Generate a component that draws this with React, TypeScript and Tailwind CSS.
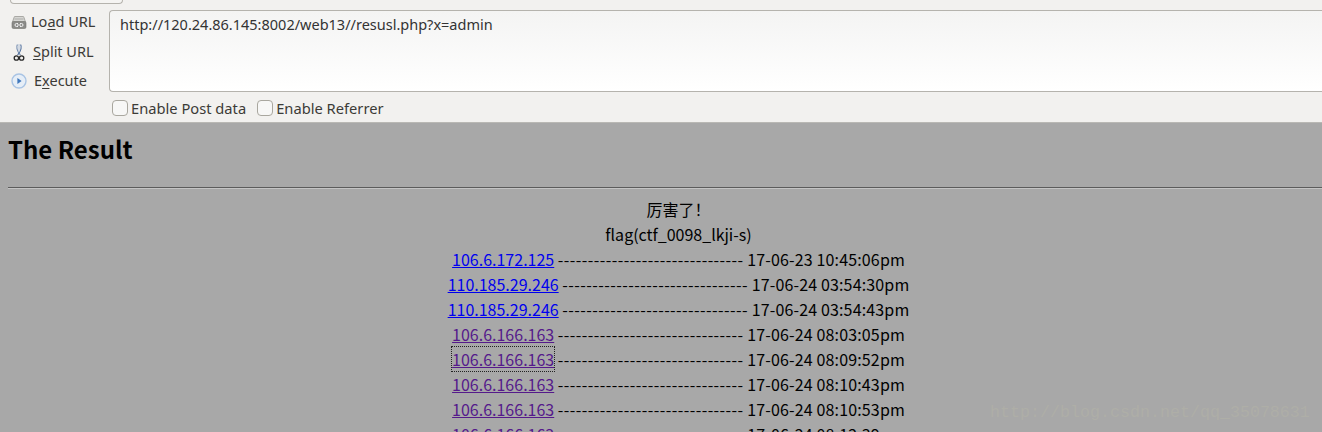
import React from 'react';

const dashes = '-'.repeat(31);

type Row = { ip: string; time: string; visited?: boolean; focused?: boolean };

const rows: Row[] = [
  { ip: '106.6.172.125', time: '17-06-23 10:45:06pm' },
  { ip: '110.185.29.246', time: '17-06-24 03:54:30pm' },
  { ip: '110.185.29.246', time: '17-06-24 03:54:43pm' },
  { ip: '106.6.166.163', time: '17-06-24 08:03:05pm', visited: true },
  { ip: '106.6.166.163', time: '17-06-24 08:09:52pm', visited: true, focused: true },
  { ip: '106.6.166.163', time: '17-06-24 08:10:43pm', visited: true },
  { ip: '106.6.166.163', time: '17-06-24 08:10:53pm', visited: true },
  { ip: '106.6.166.163', time: '17-06-24 08:12:39pm', visited: true },
];

function LoadIcon() {
  return (
    <svg width="16" height="16" viewBox="0 0 16 16">
      <path d="M3 3.5 Q3 2.5 4 2.5 H12 Q13 2.5 13 3.5 L14.5 8 H1.5 Z" fill="#d6d6d3" stroke="#9a9a96" strokeWidth="0.8" />
      <path d="M3.5 5 H12.5" stroke="#a5a5a2" strokeWidth="0.8" />
      <rect x="1" y="7.5" width="14" height="7" rx="1.5" fill="#8b8b88" stroke="#73736f" strokeWidth="0.6" />
      <path d="M7 9.5 H5.5 a1.5 1.5 0 0 0 0 3 H7 M9 9.5 H10.5 a1.5 1.5 0 0 1 0 3 H9 M6 11 H10" fill="none" stroke="#f2f2f2" strokeWidth="1" />
    </svg>
  );
}

function ScissorsIcon() {
  return (
    <svg width="12" height="19" viewBox="0 0 12 19">
      <path d="M4.4 1.5 C3.2 3.5 3.6 8 7.4 12" fill="none" stroke="#6f88ad" strokeWidth="1.1" />
      <path d="M7.6 1.5 C8.8 3.5 8.4 8 4.6 12" fill="none" stroke="#4f6f9e" strokeWidth="1.1" />
      <path d="M6 1 V8" stroke="#b4c2d6" strokeWidth="1" />
      <circle cx="3.4" cy="15" r="2.2" fill="none" stroke="#2a2a2a" strokeWidth="1.3" />
      <circle cx="8.6" cy="15" r="2.2" fill="none" stroke="#2a2a2a" strokeWidth="1.3" />
    </svg>
  );
}

function ExecuteIcon() {
  return (
    <svg width="16" height="16" viewBox="0 0 16 16">
      <circle cx="8" cy="8" r="7" fill="#e6eef7" stroke="#a9c4e4" strokeWidth="1.4" />
      <path d="M6.4 5 L10.6 8 L6.4 11 Z" fill="#3f78bd" />
    </svg>
  );
}

function Mnemonic({ before, letter, after }: { before: string; letter: string; after: string }) {
  return (
    <span>
      {before}
      <span className="underline underline-offset-2">{letter}</span>
      {after}
    </span>
  );
}

function Toolbar() {
  return (
    <div className="h-[123px] bg-[#f2f1ef] border-b border-[#b9b8b4] text-[#3c3b37] text-[14.5px] font-['Noto_Sans',sans-serif]">
      <div className="ml-[10px] w-[113px] h-[4px] border-x border-b border-[#b5b3ad] rounded-b-[4px] bg-[#f5f4f2]" />
      <div className="flex mt-[6px]">
        <div className="w-[109px] shrink-0 flex flex-col">
          <div className="h-[24px] flex items-center pl-[11px] gap-[4px]">
            <LoadIcon />
            <Mnemonic before="Lo" letter="a" after="d URL" />
          </div>
          <div className="h-[30px] mt-[3px] flex items-center pl-[13px] gap-[8px]">
            <ScissorsIcon />
            <Mnemonic before="" letter="S" after="plit URL" />
          </div>
          <div className="h-[28px] flex items-center pl-[11px] gap-[7px]">
            <ExecuteIcon />
            <Mnemonic before="E" letter="x" after="ecute" />
          </div>
        </div>
        <div className="flex-1 h-[82px] border border-r-0 border-[#b5b3ad] rounded-l-[4px] bg-gradient-to-b from-[#f4f4f3] to-white px-[10px] pt-[3px] text-[#333]">
          http://120.24.86.145:8002/web13//resusl.php?x=admin
        </div>
      </div>
      <div className="flex items-center ml-[112px] mt-[3px] h-[20px] text-[14.7px]">
        <span className="w-[16px] h-[16px] border border-[#a9a79f] rounded-[4px] bg-[#f7f7f6] mr-[3px]" />
        <span>Enable Post data</span>
        <span className="w-[16px] h-[16px] border border-[#a9a79f] rounded-[4px] bg-[#f7f7f6] ml-[11px] mr-[3px]" />
        <span>Enable Referrer</span>
      </div>
    </div>
  );
}

export default function App() {
  return (
    <div className="relative h-screen overflow-hidden bg-[#a8a8a8] text-black font-['Noto_Sans_CJK_SC',sans-serif] text-[16px]">
      <Toolbar />
      <div className="w-[1349px] pl-[8px]">
        <h1 className="text-[24px] font-bold leading-[36px] mt-[8px] mb-[20px]">The Result</h1>
        <div className="h-[2px] border-t border-t-[#5c5c5c] border-b border-b-[#c4c4c4]" />
        <div className="mt-[8px] text-center leading-[25px]">
          <div>厉害了！</div>
          <div>flag(ctf_0098_lkji-s)</div>
          {rows.map((row, i) => (
            <div key={i}>
              <a
                href="#"
                className={`underline ${row.visited ? 'text-[#551a8b]' : 'text-[#0000ee]'} ${row.focused ? 'outline-1 outline-dotted outline-[#222]' : ''}`}
              >
                {row.ip}
              </a>{' '}
              <span className="tracking-[0.44px]">{dashes}</span> <span className="tracking-[0.15px]">{row.time}</span>
            </div>
          ))}
        </div>
      </div>
      <div className="absolute left-[990px] top-[403px] text-[16.67px] leading-[20px] text-[#aeaea7] font-['Liberation_Mono',monospace]">
        http://blog.csdn.net/qq_35078631
      </div>
    </div>
  );
}
